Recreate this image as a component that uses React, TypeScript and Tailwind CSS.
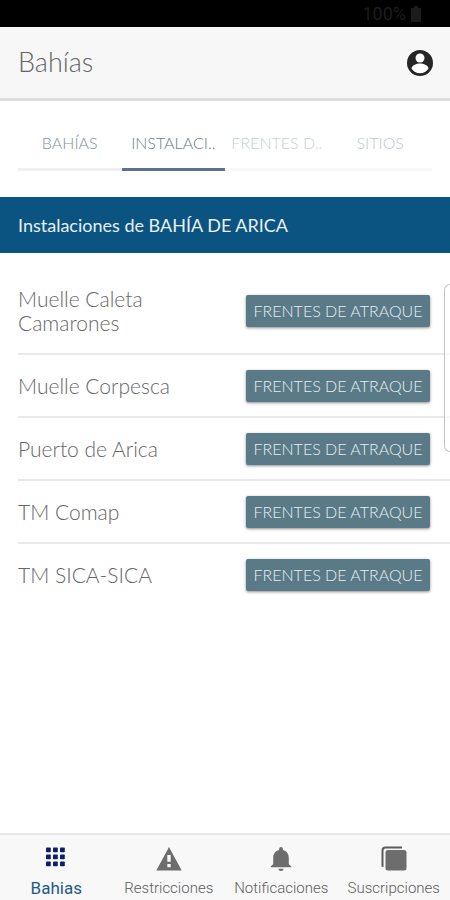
import React from "react";
import clsx from "clsx";

interface NavItem {
    label: string;
    icon: React.ReactNode;
    active?: boolean;
}

const tabs = [
    { label: "BAHÍAS", className: "text-[#7f919f] border-[#f0f0f0]" },
    { label: "INSTALACI..", className: "text-[#6a7b87] border-[#5b6e93]" },
    { label: "FRENTES D..", className: "text-[#c6d0d4] border-[#f8f8f8]" },
    { label: "SITIOS", className: "text-[#bccace] border-[#f8f8f8]" },
];

const facilities = [
    "Muelle Caleta Camarones",
    "Muelle Corpesca",
    "Puerto de Arica",
    "TM Comap",
    "TM SICA-SICA",
];

const navItems: NavItem[] = [
    {
        label: "Bahias",
        active: true,
        icon: (
            <svg viewBox="0 0 28 28" className="h-7 w-7" fill="#0d1f6b">
                {[2, 9, 16].map((y) =>
                    [4, 11, 18].map((x) => (
                        <rect key={`${x}-${y}`} x={x} y={y + 0.5} width="4.800" height="4.800" rx="0.8" />
                    ))
                )}
            </svg>
        ),
    },
    {
        label: "Restricciones",
        icon: (
            <svg viewBox="0 0 28 28" className="h-7 w-7" fill="#6d6d6d">
                <path fillRule="evenodd" d="M14 2 26.700 25.500H1.300zM12.300 10v6.800h3.400V10zM12.300 19v3.300h3.400V19z" />
            </svg>
        ),
    },
    {
        label: "Notificaciones",
        icon: (
            <svg viewBox="0 0 28 28" className="h-7 w-7" fill="#6d6d6d">
                <path d="M14 26c1.500 0 2.500-1 2.500-2.300h-5C11.500 25 12.500 26 14 26zM21.800 19.300v-6.500c0-4-2.200-7-5.900-7.900V4c0-1.100-.8-2-1.900-2s-1.900.9-1.900 2v.9c-3.700.9-5.900 3.900-5.900 7.900v6.500L3.800 21.300v1h20.400v-1z" />
            </svg>
        ),
    },
    {
        label: "Suscripciones",
        icon: (
            <svg viewBox="0 0 28 28" className="h-7 w-7">
                <path d="M22 1.500H5.500a4 4 0 0 0-4 4V21c0 .6 1 1 2 1V5.500A2 2 0 0 1 5.500 3.500H22z" fill="#5a5a5a" />
                <rect x="5.500" y="5" width="21" height="20.500" rx="2.500" fill="#6d6d6d" />
            </svg>
        ),
    },
];

const StatusBar = () => (
    <div className="flex h-[27px] items-center justify-end bg-black pr-7 font-['Roboto'] text-lg text-[#1c1c1c]">
        <span>100%</span>
        <svg viewBox="0 0 12 16" className="ml-1 h-4 w-3" fill="#1c1c1c">
            <path d="M4 0h4v2h2a1 1 0 0 1 1 1v12a1 1 0 0 1-1 1H2a1 1 0 0 1-1-1V3a1 1 0 0 1 1-1h2z" />
        </svg>
    </div>
);

const Header = () => (
    <header className="flex h-[74px] items-center justify-between border-b-3 border-[#dedede] bg-[#f7f7f7] pr-4 pl-[18px]">
        <h1 className="text-[27px] font-light text-[#666]">Bahías</h1>
        <button type="button" aria-label="Perfil">
            <svg viewBox="0 0 28 28" className="h-7 w-7">
                <circle cx="14" cy="14" r="13" fill="#262626" />
                <circle cx="14" cy="9" r="4.500" fill="#fff" />
                <path d="M5.500 19.500c0-3 5-5 8.500-5s8.500 2 8.500 5c-1.800 3-5 4.700-8.500 4.700s-6.700-1.700-8.500-4.700z" fill="#fff" />
            </svg>
        </button>
    </header>
);

const FacilityRow: React.FC<{ name: string; last: boolean }> = ({ name, last }) => (
    <li
        className={clsx(
            "flex min-h-[63px] items-center justify-between border-b-2 py-[18px] pr-5",
            last ? "border-transparent" : "border-[#e9e9e9]"
        )}
    >
        <span className="w-[170px] text-[21px] leading-6 font-light text-[#666]">{name}</span>
        <button
            type="button"
            className="-my-1 h-8 w-[184px] rounded-xs bg-[#5b7a88] text-base font-light whitespace-nowrap text-[#e6eef1] shadow-[0_1px_3px_rgba(0,0,0,0.45)]"
        >
            FRENTES DE ATRAQUE
        </button>
    </li>
);

export default function App() {
    return (
        <div className="relative flex min-h-screen flex-col overflow-x-hidden bg-white font-['Lato',sans-serif]">
            <StatusBar />
            <Header />

            <div className="mt-4 grid grid-cols-4 px-[18px]">
                {tabs.map((tab) => (
                    <button
                        key={tab.label}
                        type="button"
                        className={clsx("h-[54px] border-b-3 text-base font-light whitespace-nowrap", tab.className)}
                    >
                        {tab.label}
                    </button>
                ))}
            </div>

            <h2 className="mt-[26px] flex h-14 items-center bg-[#0b5380] px-[18px] text-lg text-[#e8f0f5]">
                Instalaciones de BAHÍA DE ARICA
            </h2>

            <ul className="mt-4 flex-1 pl-[18px]">
                {facilities.map((name, index) => (
                    <FacilityRow key={name} name={name} last={index === facilities.length - 1} />
                ))}
            </ul>

            {/* edge panel handle */}
            <div className="absolute top-[284px] right-0 h-[168px] w-[6px] rounded-l-md border border-r-0 border-[#c4c4c4] bg-white/60" />

            <nav className="grid h-[67px] grid-cols-4 border-t-2 border-[#e6e6e6] bg-[#f8f8f8] font-['Roboto',sans-serif]">
                {navItems.map((item) => (
                    <a
                        key={item.label}
                        href="#"
                        className={clsx(
                            "flex flex-col items-center justify-between pt-[10px] pb-[2px] whitespace-nowrap",
                            item.active ? "text-[17px] text-[#1f5a86]" : "text-[15px] font-light text-[#5c5c5c]"
                        )}
                    >
                        {item.icon}
                        <span className="leading-5">{item.label}</span>
                    </a>
                ))}
            </nav>
        </div>
    );
}
